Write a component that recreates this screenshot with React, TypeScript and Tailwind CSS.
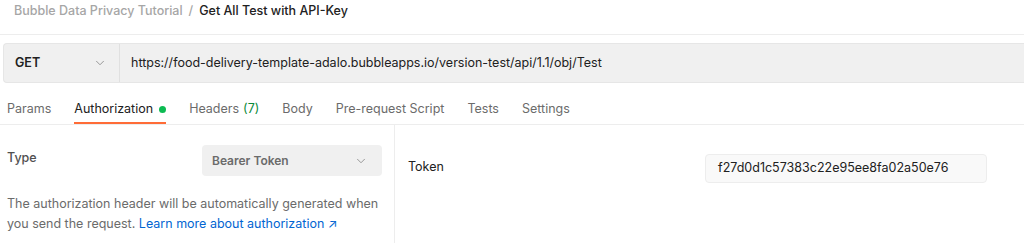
import { ChevronDown } from "lucide-react";

const tabs = [
  { label: "Params" },
  { label: "Authorization", active: true, dot: true },
  { label: "Headers", count: "(7)" },
  { label: "Body" },
  { label: "Pre-request Script" },
  { label: "Tests" },
  { label: "Settings" },
];

const App = () => {
  return (
    <div className="h-[243px] w-[1024px] overflow-hidden bg-white font-['Inter',sans-serif] text-[12.5px] text-[#212121]">
      {/* breadcrumb */}
      <div className="flex h-[35px] items-start border-b border-[#ededed] pl-[14px] pt-[2px] font-medium">
        <span className="text-[#a6a6a6]">Bubble Data Privacy Tutorial</span>
        <span className="mx-[6px] text-[#a6a6a6]">/</span>
        <span className="text-[#212121]">Get All Test with API-Key</span>
      </div>

      {/* url bar */}
      <div className="pl-[3px] pt-[8px]">
        <div className="flex h-[40px] rounded-l-[4px] border border-r-0 border-[#e6e6e6] bg-[#f0f0f0]">
          <div className="flex w-[116px] items-center justify-between border-r border-[#e0e0e0] pl-[11px] pr-[12px]">
            <span className="font-semibold text-[#212121]">GET</span>
            <ChevronDown size={14} strokeWidth={1.5} className="text-[#8a8a8a]" />
          </div>
          <div className="flex items-center pl-[11px] text-[#212121]">
            https://food-delivery-template-adalo.bubbleapps.io/version-test/api/1.1/obj/Test
          </div>
        </div>
      </div>

      {/* tabs */}
      <div className="flex h-[42px] border-b border-[#ededed] pl-[7px]">
        {tabs.map((t) => (
          <div
            key={t.label}
            className={`mr-[23px] flex items-start border-b-2 pt-[17px] leading-[18px] ${
              t.active ? "border-[#ff6c37] text-[#212121]" : "border-transparent text-[#6b6b6b]"
            }`}
          >
            <span>{t.label}</span>
            {t.dot && <span className="ml-[6px] mt-[6px] h-[7px] w-[7px] rounded-full bg-[#0cbb52]" />}
            {t.count && <span className="ml-[4px] text-[#0a8a3a]">{t.count}</span>}
          </div>
        ))}
      </div>

      {/* body */}
      <div className="flex">
        <div className="w-[395px] border-r border-[#ededed] pl-[7px] pr-[12px]">
          <div className="flex items-start justify-between pt-[20px]">
            <span className="mt-[4px] font-medium text-[#505050]">Type</span>
            <div className="flex h-[31px] w-[180px] items-center justify-between rounded-[4px] bg-[#f0f0f0] pl-[10px] pr-[14px]">
              <span className="text-[12px] font-semibold text-[#6b6b6b]">Bearer Token</span>
              <ChevronDown size={14} strokeWidth={1.5} className="text-[#8a8a8a]" />
            </div>
          </div>
          <p className="mt-[18px] pb-[10px] leading-[20px] text-[#6b6b6b]">
            The authorization header will be automatically generated when you send the request.{" "}
            <span className="text-[#0265d2]">Learn more about authorization ↗</span>
          </p>
        </div>
        <div className="flex flex-1 items-start justify-between pl-[13px] pr-[37px] pt-[29px]">
          <span className="mt-[4px] text-[#212121]">Token</span>
          <div className="flex h-[29px] w-[282px] items-center rounded-[4px] border border-[#ededed] bg-[#f9f9f9] pl-[12px] text-[#212121]">
            f27d0d1c57383c22e95ee8fa02a50e76
          </div>
        </div>
      </div>
    </div>
  );
};

export default App;
